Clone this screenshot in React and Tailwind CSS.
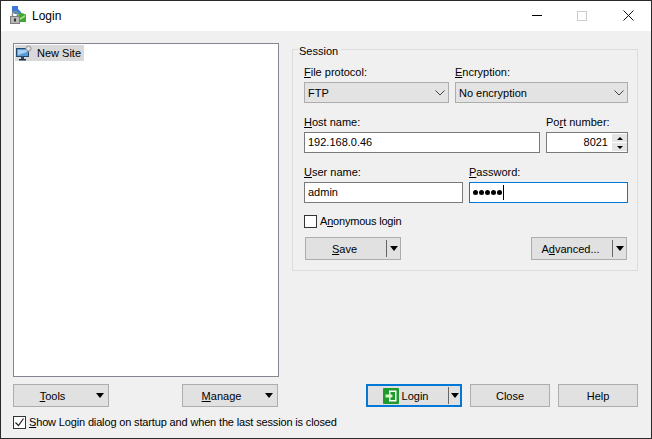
import React from 'react';

const LockIcon = () => (
  <svg width="18" height="18" viewBox="0 0 18 18">
    <path d="M3 0h6v3l3 3v2H6L3 6z" fill="#3b78d8" />
    <path d="M10 6l7 2.500V16H10V14l-1-3z" fill="#3fa535" />
    <path d="M7 9l4 3 5-3v2l-5 3-4-3z" fill="#a8e08a" />
    <path d="M3.500 10V8a2.500 2.500 0 0 1 5 0v2" fill="none" stroke="#8a8a8a" strokeWidth="1.400" />
    <rect x="1" y="10" width="10" height="8" fill="#7c7c7c" />
    <rect x="2" y="11" width="8" height="6" fill="#b9b9b9" />
    <rect x="5" y="12.500" width="2" height="3" fill="#333" />
  </svg>
);

const SiteIcon = () => (
  <svg width="16" height="16" viewBox="0 0 16 16">
    <rect x="0.500" y="3.500" width="12" height="8" fill="#5b9bd8" stroke="#27496d" />
    <path d="M2 5h9v2L2 10z" fill="#a9d2f2" />
    <rect x="5" y="12" width="3" height="2" fill="#27496d" />
    <rect x="3" y="14" width="7" height="1.500" fill="#1c2f44" />
    <circle cx="12.500" cy="3.500" r="2.600" fill="#d6d6d6" stroke="#9a9a9a" />
    <circle cx="12.500" cy="3.500" r="0.900" fill="#f4f4f4" />
  </svg>
);

const LoginIcon = () => (
  <svg width="16" height="16" viewBox="0 0 16 16">
    <rect width="16" height="16" rx="1" fill="#1f9a2e" />
    <path d="M6 2.500h7.500v11H6v-3h1.500v1.500h4.500V4H7.500v1.500H6z" fill="#fff" />
    <path d="M2.500 6.500H6V4.500L10 8l-4 3.500v-2H2.500z" fill="#d9f5c8" />
  </svg>
);

const Caret = () => (
  <span className="w-0 h-0 border-x-[4.500px] border-x-transparent border-t-[5px] border-t-black" />
);

const Chevron = () => (
  <svg width="10" height="6" viewBox="0 0 10 6" className="shrink-0">
    <path d="M0.500 0.500L5 5l4.500-4.500" fill="none" stroke="#444" />
  </svg>
);

const Combo = ({ value, className = '' }) => (
  <div className={`h-[21px] bg-[#e3e3e3] border border-[#adadad] flex items-center justify-between pl-[3px] pr-[3px] ${className}`}>
    <span className="pt-px">{value}</span>
    <Chevron />
  </div>
);

const Field = ({ children, className = '' }) => (
  <div className={`h-[21px] bg-white border border-[#7a7a7a] flex items-center px-[3px] ${className}`}>{children}</div>
);

const Label = ({ children, className = '' }) => (
  <div className={`h-[16px] leading-[16px] mb-[2px] ${className}`}>{children}</div>
);

const Button = ({ children, className = '' }) => (
  <button className={`h-[23px] bg-[#e1e1e1] border border-[#adadad] flex items-center justify-center pt-px ${className}`}>
    {children}
  </button>
);

const SplitButton = ({ children, className = '' }) => (
  <button className={`h-[23px] bg-[#e1e1e1] border border-[#adadad] flex items-center ${className}`}>
    <span className="flex-1 flex items-center justify-center pr-[3px] pt-px">{children}</span>
    <span className="w-px h-[17px] bg-[#666]" />
    <span className="w-[13px] flex justify-center"><Caret /></span>
  </button>
);

const MenuButton = ({ children }) => (
  <button className="w-[96px] h-[23px] bg-[#e1e1e1] border border-[#adadad] flex items-center pr-[4px]">
    <span className="flex-1 text-center pr-[5px] pt-px">{children}</span>
    <Caret />
  </button>
);

export default function App() {
  return (
    <div className="w-[652px] h-[439px] bg-[#f0f0f0] border border-[#2b2b2b] flex flex-col text-[11px] text-black overflow-hidden" style={{ fontFamily: '"Liberation Sans", sans-serif' }}>
      <div className="h-[30px] bg-white flex items-center shrink-0">
        <div className="ml-[8px] mr-[5px] mb-[2px]"><LockIcon /></div>
        <span className="mb-[1px] text-[12px]">Login</span>
        <div className="ml-auto flex items-center mb-[1px]">
          <span className="w-[10px] h-px bg-black mr-[35px]" />
          <span className="w-[10px] h-[10px] border border-[#cccccc] mr-[36px]" />
          <svg width="11" height="11" viewBox="0 0 11 11" className="mr-[17px]">
            <path d="M0.500 0.500l10 10M10.500 0.500l-10 10" stroke="#111" />
          </svg>
        </div>
      </div>

      <div className="flex-1 flex flex-col pl-[12px] pr-[13px] pt-[12px]">
        <div className="flex h-[334px] shrink-0">
          <div className="w-[266px] bg-white border border-[#828790] p-[1px]">
            <div className="w-[69px] h-[16px] bg-[#d9d9d9] flex items-center whitespace-nowrap">
              <div className="ml-[1px] mr-[5px]"><SiteIcon /></div>
              <span>New Site</span>
            </div>
          </div>

          <fieldset className="ml-[13px] w-[346px] h-[232px] border border-[#dcdcdc] pl-[11px] pr-[9px] pt-[5px] mt-[-4px]">
            <legend className="ml-[-6px] pr-[3px] pl-[1px] pt-[4px] leading-[16px]">Session</legend>
            <div className="flex gap-[6px]">
              <div className="w-[145px]">
                <Label><u>F</u>ile protocol:</Label>
                <Combo value="FTP" />
              </div>
              <div className="w-[173px]">
                <Label><u>E</u>ncryption:</Label>
                <Combo value="No encryption" />
              </div>
            </div>
            <div className="flex gap-[6px] mt-[11px]">
              <div className="w-[236px]">
                <Label><u>H</u>ost name:</Label>
                <Field>192.168.0.46</Field>
              </div>
              <div className="w-[82px]">
                <Label>Po<u>r</u>t number:</Label>
                <Field className="pr-0 justify-end">
                  <span className="mr-[4px]">8021</span>
                  <span className="w-[15px] flex flex-col gap-px">
                    <span className="h-[8px] bg-[#e5e5e5] flex items-center justify-center">
                      <span className="w-0 h-0 border-x-[3px] border-x-transparent border-b-[3px] border-b-black" />
                    </span>
                    <span className="h-[8px] bg-[#e5e5e5] flex items-center justify-center">
                      <span className="w-0 h-0 border-x-[3px] border-x-transparent border-t-[3px] border-t-black" />
                    </span>
                  </span>
                </Field>
              </div>
            </div>
            <div className="flex gap-[6px] mt-[11px]">
              <div className="w-[159px]">
                <Label><u>U</u>ser name:</Label>
                <Field className="px-[2px]">admin</Field>
              </div>
              <div className="w-[159px]">
                <Label><u>P</u>assword:</Label>
                <div className="h-[21px] bg-white border border-[#0078d7] flex items-center px-[3px] gap-[1px]">
                  <span className="w-[5px] h-[5px] rounded-full bg-black" />
                  <span className="w-[5px] h-[5px] rounded-full bg-black" />
                  <span className="w-[5px] h-[5px] rounded-full bg-black" />
                  <span className="w-[5px] h-[5px] rounded-full bg-black" />
                  <span className="w-[5px] h-[5px] rounded-full bg-black" />
                  <span className="w-px h-[15px] bg-black" />
                </div>
              </div>
            </div>
            <div className="flex items-center mt-[12px] h-[13px]">
              <span className="w-[13px] h-[13px] bg-white border border-[#333] mr-[3px]" />
              <span className="tracking-[-0.2px]">A<u>n</u>onymous login</span>
            </div>
            <div className="flex justify-between mt-[9px] pl-[1px] pr-[1px] w-[324px]">
              <SplitButton className="w-[96px]"><u>S</u>ave</SplitButton>
              <SplitButton className="w-[96px]">A<u>d</u>vanced...</SplitButton>
            </div>
          </fieldset>
        </div>

        <div className="flex mt-[7px]">
          <div className="w-[266px] flex justify-between pr-[1px]">
            <MenuButton><u>T</u>ools</MenuButton>
            <MenuButton><u>M</u>anage</MenuButton>
          </div>
          <div className="ml-[87px] flex">
            <button className="w-[96px] h-[23px] bg-[#e1e1e1] border-2 border-[#0078d7] flex items-center">
              <span className="flex-1 flex items-center justify-center gap-[3px] pr-[5px]"><LoginIcon /><span className="pt-px">Login</span></span>
              <span className="w-px h-[17px] bg-[#666]" />
              <span className="w-[11px] flex justify-center"><Caret /></span>
            </button>
            <Button className="w-[80px] ml-[8px]">Close</Button>
            <Button className="w-[80px] ml-[8px]">Help</Button>
          </div>
        </div>

        <div className="flex items-center mt-[9px] h-[13px]">
          <span className="w-[13px] h-[13px] bg-white border border-[#333] mr-[3px] flex items-center justify-center">
            <svg width="11" height="11" viewBox="0 0 11 11">
              <path d="M1.500 5.500l3 3 5-7" fill="none" stroke="#222" strokeWidth="1.200" />
            </svg>
          </span>
          <span className="tracking-[-0.15px]"><u>S</u>how Login dialog on startup and when the last session is closed</span>
        </div>
      </div>
    </div>
  );
}
